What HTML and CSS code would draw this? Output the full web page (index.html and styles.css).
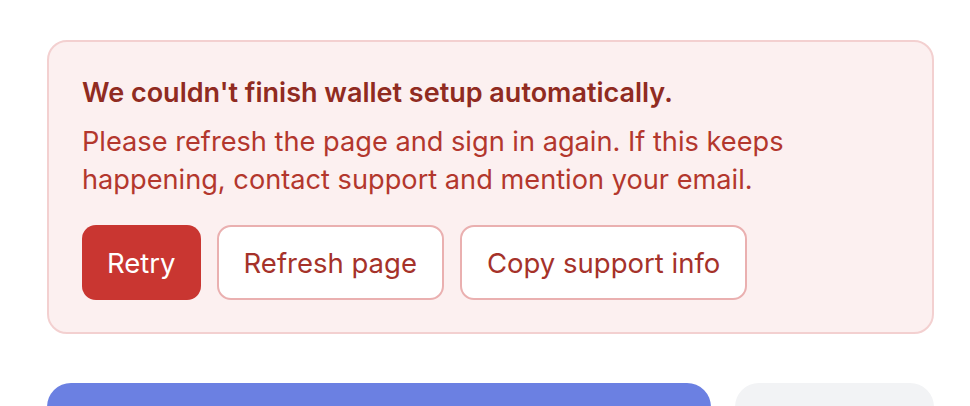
FILE: index.html
```html
<!DOCTYPE html>
<html lang="en">
<head>
  <meta charset="UTF-8">
  <meta name="viewport" content="width=device-width, initial-scale=1.0">
  <title>Wallet setup</title>
  <link rel="stylesheet" href="styles.css">
</head>
<body>
  <div class="page">
    <div class="alert">
      <h2 class="alert-title">We couldn't finish wallet setup automatically.</h2>
      <p class="alert-text">Please refresh the page and sign in again. If this keeps happening, contact support and mention your email.</p>
      <div class="alert-actions">
        <button class="btn btn-primary">Retry</button>
        <button class="btn btn-outline">Refresh page</button>
        <button class="btn btn-outline">Copy support info</button>
      </div>
    </div>

    <!-- Actions below the alert -->
    <div class="footer-row">
      <button class="big-btn big-btn-blue"></button>
      <button class="big-btn big-btn-gray"></button>
    </div>
  </div>
</body>
</html>
```

FILE: styles.css
```css
body {
  font-family: Inter, "Noto Sans", sans-serif;
  margin: 0;
  padding: 0;
  background: #fff;
}
.page {
  padding: 40px 36px 0 47px;
}
.alert {
  background: #fcf0f0;
  border: 2px solid #f3d0d0;
  border-radius: 20px;
  padding: 32px 32px 32px 33px;
}
.alert-title {
  margin: 0;
  font-size: 27px;
  font-weight: 600;
  line-height: 38px;
  color: #902b21;
}
.alert-text {
  margin: 11px 0 0;
  font-size: 27.2px;
  line-height: 38px;
  color: #b3372d;
}
.alert-actions {
  display: flex;
  gap: 16px;
  margin-top: 26px;
}
.btn {
  font-family: inherit;
  font-size: 27.5px;
  height: 75px;
  padding: 0 25px;
  border-radius: 14px;
  cursor: pointer;
}
.btn-primary {
  background: #c93631;
  color: #fff;
  border: none;
}
.btn-outline {
  background: #fff;
  color: #a5322a;
  border: 2px solid #eab0b0;
}
.footer-row {
  display: flex;
  gap: 24px;
  margin-top: 49px;
}
.big-btn {
  height: 80px;
  border: none;
  border-radius: 24px;
}
.big-btn-blue {
  flex: 1;
  background: #6b80e2;
}
.big-btn-gray {
  width: 199px;
  background: #f2f3f5;
}
```
